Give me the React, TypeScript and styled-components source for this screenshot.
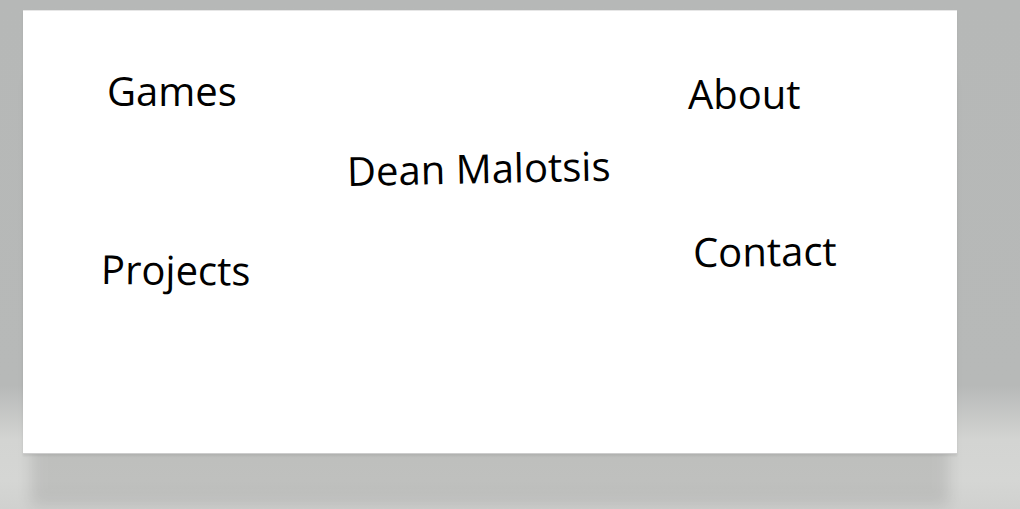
import React from "react";
import styled, { createGlobalStyle } from "styled-components";

const Global = createGlobalStyle`
  html, body {
    margin: 0;
    padding: 0;
    height: 100%;
  }
  body {
    background: linear-gradient(
      to bottom,
      #b6b8b7 0px,
      #b7b9b8 385px,
      #d3d4d2 440px,
      #d5d6d4 480px,
      #d0d1cf 509px
    );
    font-family: "Open Sans", "Noto Sans", sans-serif;
  }
`;

const Stage = styled.div`
  width: 1020px;
  height: 509px;
  padding: 10px 63px 0 23px;
  box-sizing: border-box;
  overflow: hidden;
`;

const Card = styled.main`
  width: 934px;
  height: 444px;
  box-sizing: border-box;
  background: #ffffff;
  border-top: 1px solid #e6e6e6;
  border-bottom: 1px solid #cdcdcd;
  box-shadow: 0 2px 2px rgba(0, 0, 0, 0.07), 0 60px 14px -8px rgba(0, 0, 0, 0.1);
  display: grid;
  grid-template-columns: 245px 342px 1fr;
  grid-template-rows: 80px 82px 1fr;
  padding: 54px 0 0 79px;
`;

const Link = styled.a<{ $col: number; $row: number; $dx: number; $dy: number; $rot: number }>`
  grid-column: ${(p) => p.$col};
  grid-row: ${(p) => p.$row};
  justify-self: start;
  align-self: start;
  font-size: 40px;
  line-height: 54px;
  color: #000;
  text-decoration: none;
  white-space: nowrap;
  transform: translate(${(p) => p.$dx}px, ${(p) => p.$dy}px) rotate(${(p) => p.$rot}deg);
  transform-origin: left center;
`;

export default function App() {
  return (
    <>
      <Global />
      <Stage>
        <Card>
          <Link href="#" $col={1} $row={1} $dx={5} $dy={-1} $rot={0}>
            Games
          </Link>
          <Link href="#" $col={3} $row={1} $dx={-1} $dy={2} $rot={0}>
            About
          </Link>
          <Link href="#" $col={2} $row={2} $dx={0} $dy={-1} $rot={-1.2}>
            Dean Malotsis
          </Link>
          <Link href="#" $col={1} $row={3} $dx={-1} $dy={15} $rot={0.6}>
            Projects
          </Link>
          <Link href="#" $col={3} $row={3} $dx={4} $dy={-2} $rot={-0.6}>
            Contact
          </Link>
        </Card>
      </Stage>
    </>
  );
}
